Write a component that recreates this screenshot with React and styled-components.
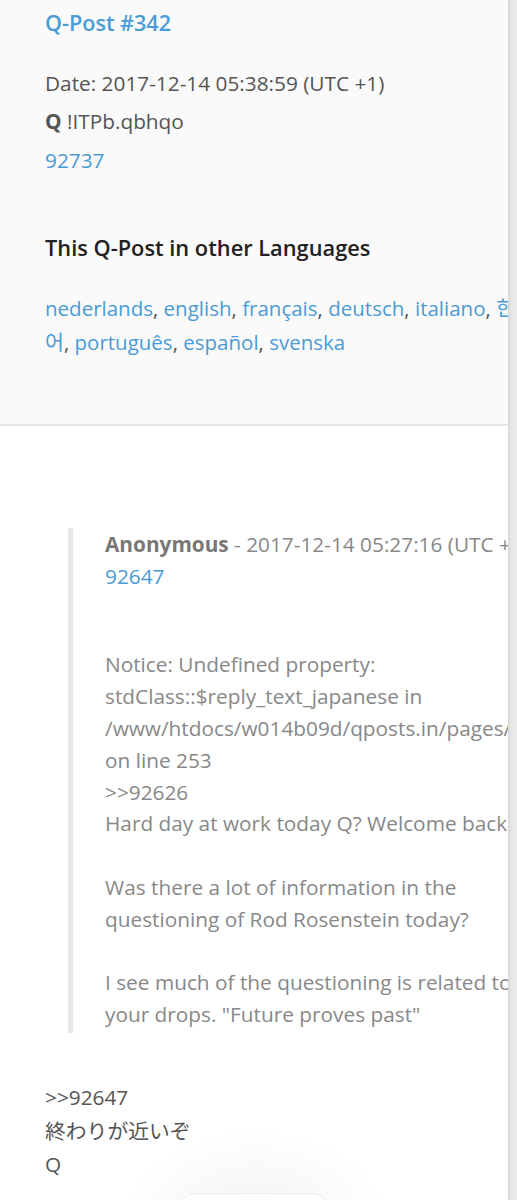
import React from "react";
import styled, { createGlobalStyle } from "styled-components";

const Global = createGlobalStyle`
  html, body { margin: 0; padding: 0; background: #fff; }
  body { font-family: "Open Sans", "Noto Sans CJK JP", sans-serif; -webkit-font-smoothing: antialiased; }
`;

const Viewport = styled.div`
  position: relative;
  display: flex;
  width: 517px;
  min-height: 1200px;
  overflow: hidden;
`;

const Page = styled.div`
  flex: 0 0 508px;
  overflow: hidden;
`;

const Strip = styled.div`
  flex: 0 0 9px;
  background: linear-gradient(to right, #d6d6d6, #e6e6e6 35%, #ececec);
`;

const Header = styled.section`
  width: 508px;
  background: #fafafa;
  border-bottom: 2px solid #e4e4e4;
  padding: 4px 0 65px;
`;

const Inner = styled.div`
  width: 505px;
  padding-left: 45px;
`;

const Title = styled.a`
  display: block;
  font-size: 21.6px;
  font-weight: 600;
  color: #4a9bd6;
  line-height: 38px;
  text-decoration: none;
  margin-bottom: 22px;
`;

const MetaLine = styled.div`
  font-size: 20.8px;
  line-height: 38.3px;
  color: ${(p) => (p.$link ? "#4a9bd6" : "#555")};
`;

const Strong = styled.b`
  font-weight: 700;
`;

const SubHeading = styled.h3`
  margin: 52px 0 26px;
  font-size: 21.8px;
  font-weight: 600;
  color: #222;
  line-height: 34px;
`;

const LangList = styled.div`
  font-size: 20.5px;
  line-height: 34px;
  color: #555;
`;

const Link = styled.a`
  color: #4a9bd6;
  text-decoration: none;
`;

const Body = styled.div`
  padding-top: 102px;
`;

const Quote = styled.blockquote`
  margin: 0 0 48px 23px;
  border-left: 5px solid #e7e7e7;
  padding: 1px 0 2px 32px;
  color: #888;
  font-size: 20.8px;
  line-height: 31.8px;
`;

const QuoteHead = styled.div`
  white-space: nowrap;
`;

const QuoteName = styled.b`
  font-weight: 700;
  color: #777;
`;

const QuoteText = styled.div`
  margin-top: 57px;
`;

const Line = styled.div`
  min-height: 31.8px;
  white-space: ${(p) => (p.$nowrap ? "nowrap" : "normal")};
`;

const Reply = styled.div`
  font-size: 20.8px;
  line-height: 33.5px;
  color: #555;
`;

const Glow = styled.div`
  position: absolute;
  left: 110px;
  top: 1120px;
  width: 290px;
  height: 200px;
  border-radius: 50%;
  background: radial-gradient(ellipse at center, rgba(0,0,0,0.05), rgba(0,0,0,0) 65%);
  pointer-events: none;
`;

const FloatButton = styled.div`
  position: absolute;
  left: 180px;
  top: 1193px;
  width: 145px;
  height: 50px;
  border-radius: 14px;
  background: #fff;
  border: 1px solid #ececec;
`;

export default function App() {
  return (
    <>
      <Global />
      <Viewport>
        <Page>
          <Header>
            <Inner>
              <Title href="#">Q-Post #342</Title>
              <MetaLine>Date: 2017-12-14 05:38:59 (UTC +1)</MetaLine>
              <MetaLine>
                <Strong>Q</Strong> !ITPb.qbhqo
              </MetaLine>
              <MetaLine $link>92737</MetaLine>
              <SubHeading>This Q-Post in other Languages</SubHeading>
              <LangList>
                <Link href="#">nederlands</Link>, <Link href="#">english</Link>,{" "}
                <Link href="#">français</Link>, <Link href="#">deutsch</Link>,{" "}
                <Link href="#">italiano</Link>, <Link href="#">한국어</Link>,{" "}
                <Link href="#">português</Link>, <Link href="#">español</Link>,{" "}
                <Link href="#">svenska</Link>
              </LangList>
            </Inner>
          </Header>
          <Body>
            <Inner>
              <Quote>
                <QuoteHead>
                  <QuoteName>Anonymous</QuoteName> - 2017-12-14 05:27:16 (UTC +1)
                </QuoteHead>
                <Link href="#">92647</Link>
                <QuoteText>
                  <Line>Notice: Undefined property:</Line>
                  <Line>stdClass::$reply_text_japanese in</Line>
                  <Line $nowrap>/www/htdocs/w014b09d/qposts.in/pages/qpost.php</Line>
                  <Line>on line 253</Line>
                  <Line>&gt;&gt;92626</Line>
                  <Line $nowrap>Hard day at work today Q? Welcome back!</Line>
                  <Line />
                  <Line>Was there a lot of information in the</Line>
                  <Line>questioning of Rod Rosenstein today?</Line>
                  <Line />
                  <Line $nowrap>I see much of the questioning is related to</Line>
                  <Line>your drops. "Future proves past"</Line>
                </QuoteText>
              </Quote>
              <Reply>
                <div>&gt;&gt;92647</div>
                <div>終わりが近いぞ</div>
                <div>Q</div>
              </Reply>
            </Inner>
          </Body>
        </Page>
        <Strip />
        <Glow />
        <FloatButton />
      </Viewport>
    </>
  );
}
